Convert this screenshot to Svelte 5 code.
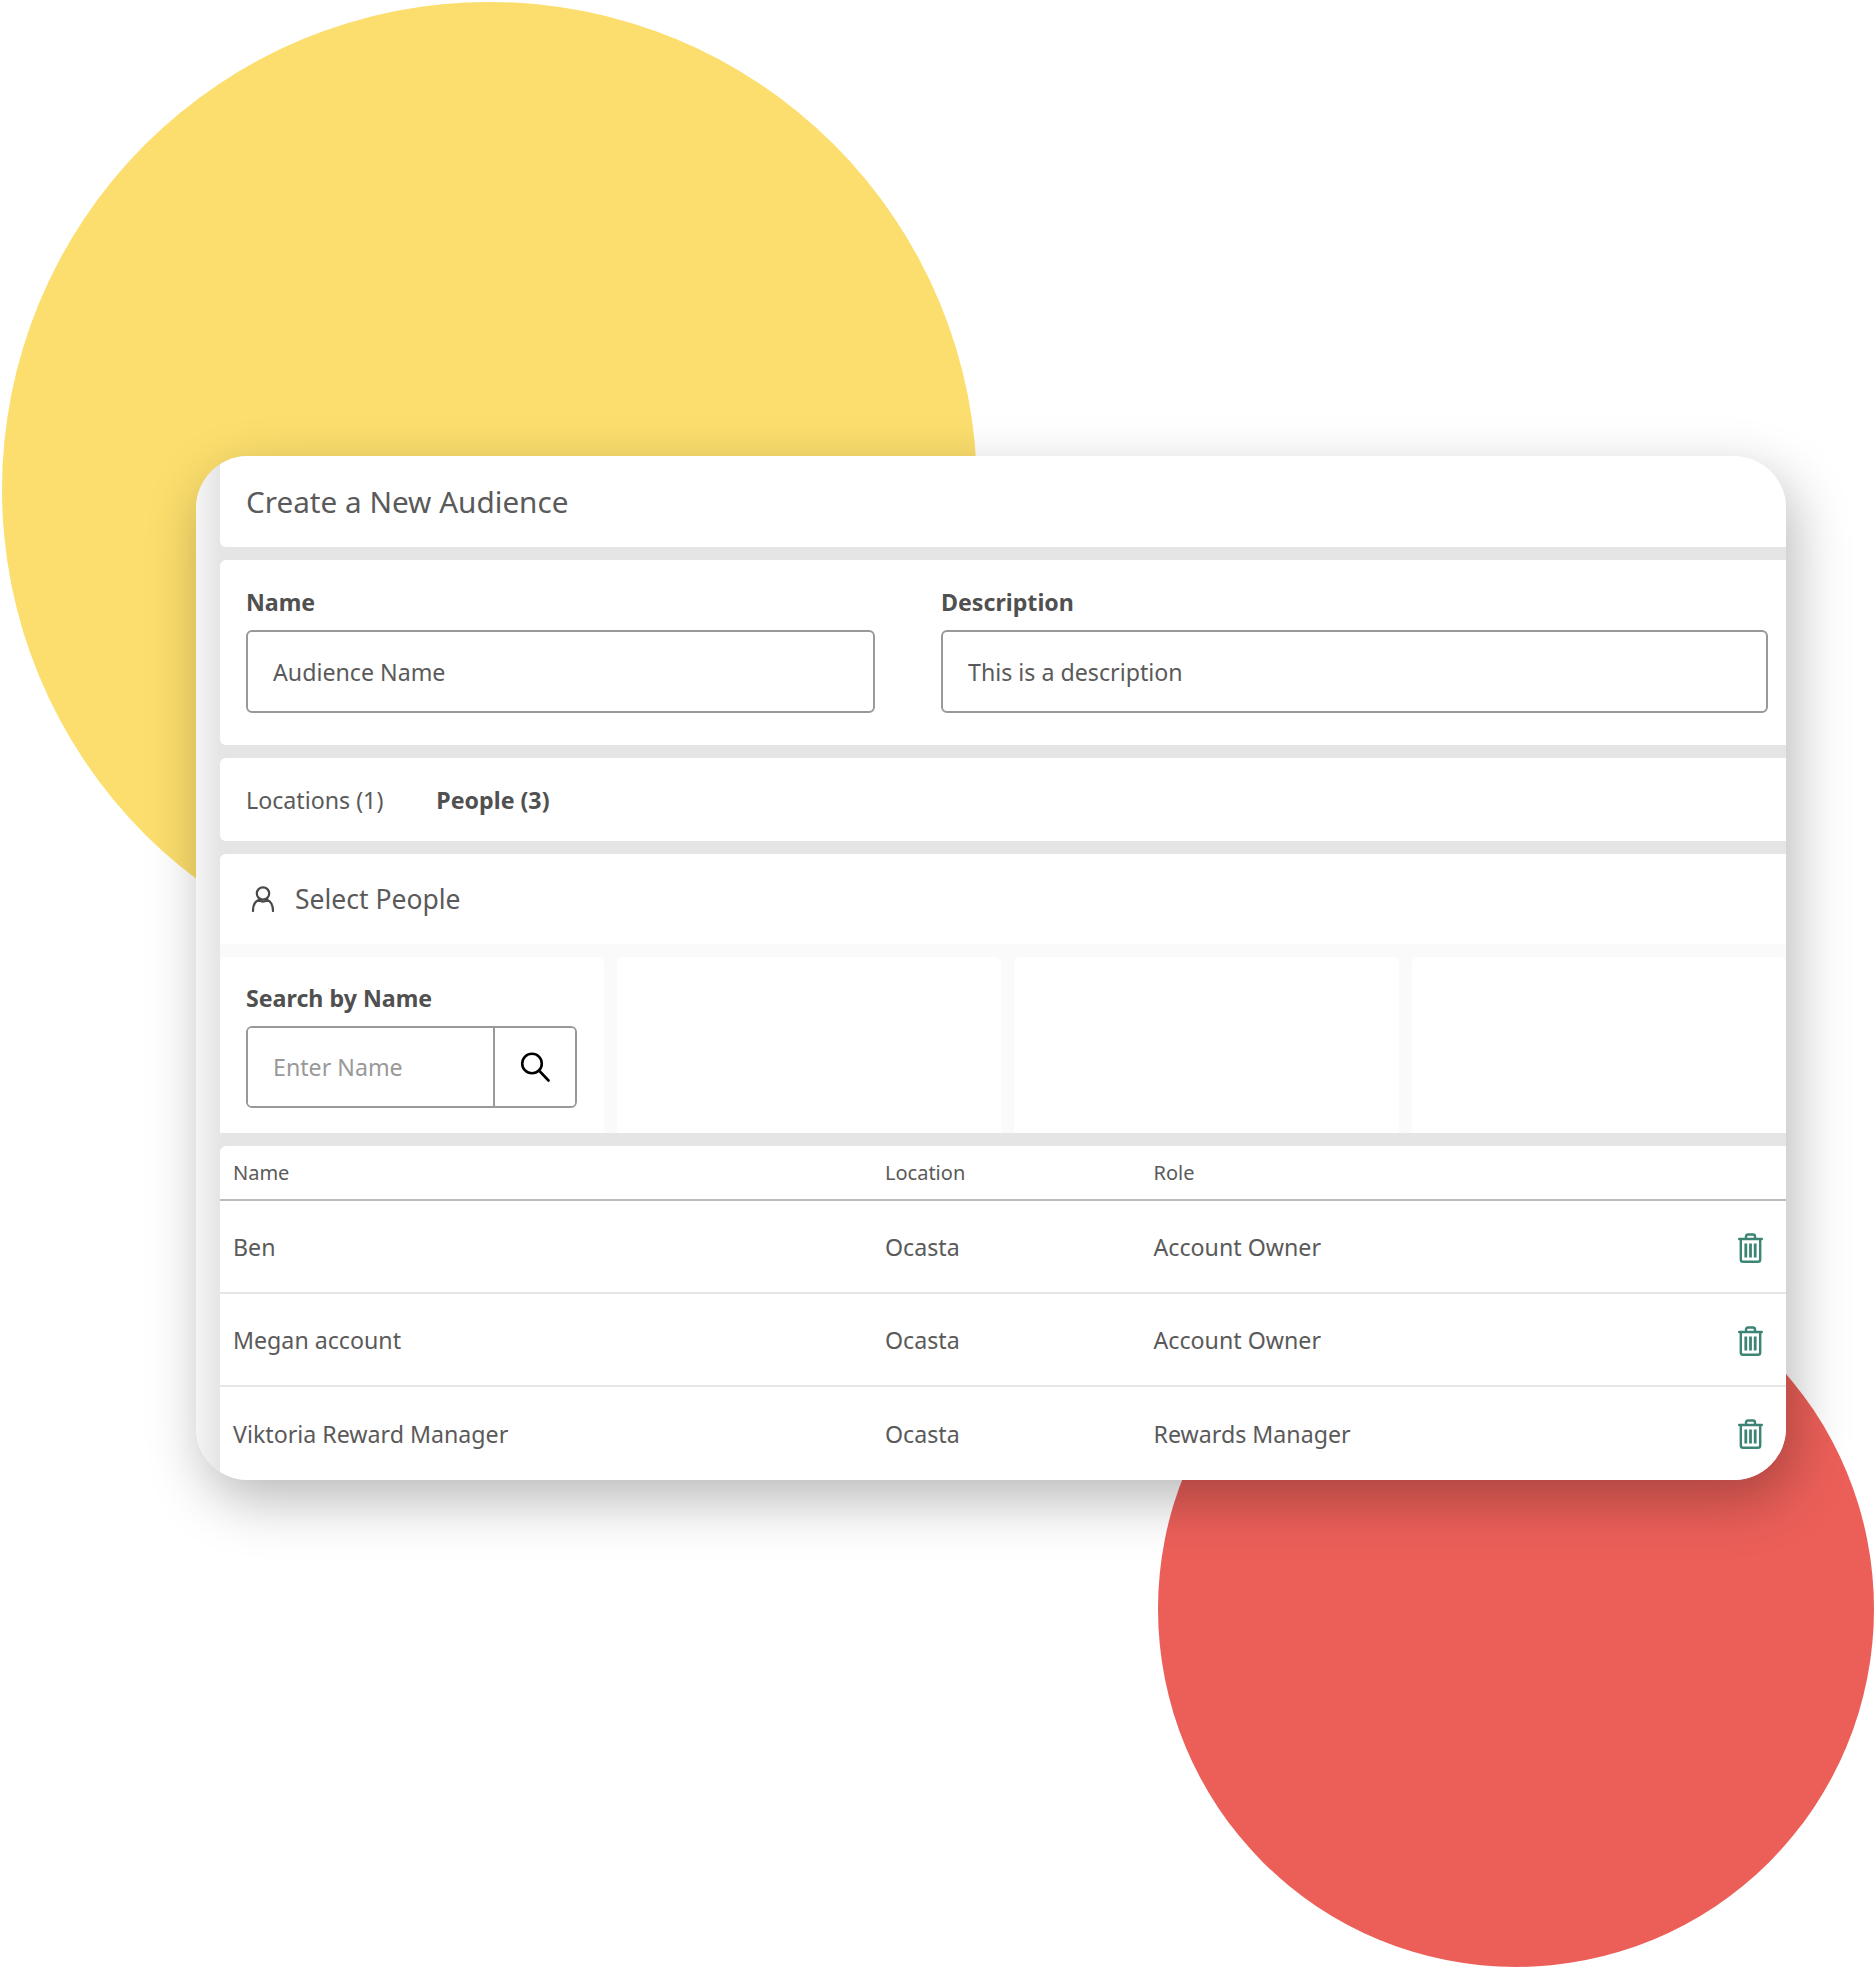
<script lang="ts">
  const people = [
    { name: 'Ben', location: 'Ocasta', role: 'Account Owner' },
    { name: 'Megan account', location: 'Ocasta', role: 'Account Owner' },
    { name: 'Viktoria Reward Manager', location: 'Ocasta', role: 'Rewards Manager' }
  ]
</script>

<div class="stage">
  <div class="circle yellow"></div>
  <div class="circle red"></div>

  <main class="card">
    <header class="panel title">Create a New Audience</header>

    <section class="panel fields">
      <label class="field name">
        <span>Name</span>
        <input value="Audience Name" />
      </label>
      <label class="field description">
        <span>Description</span>
        <input value="This is a description" />
      </label>
    </section>

    <nav class="panel tabs">
      <span>Locations (1)</span>
      <span class="active">People (3)</span>
    </nav>

    <section class="panel select">
      <div class="select-head">
        <svg width="24" height="26" viewBox="0 0 24 26" fill="none" stroke="#4a4a4a" stroke-width="2.200">
          <circle cx="12" cy="7.500" r="6.200" />
          <path d="M2 25c0-6 2.500-10 6-11.300c2.500 2.400 5.500 2.400 8 0c3.500 1.300 6 5.300 6 11.300" stroke-linecap="round" />
        </svg>
        <span>Select People</span>
      </div>
      <div class="filters">
        <div class="filter">
          <span class="label">Search by Name</span>
          <div class="search">
            <input placeholder="Enter Name" />
            <button aria-label="Search">
              <svg width="30" height="30" viewBox="0 0 30 30" fill="none" stroke="#000" stroke-width="2.600">
                <circle cx="12" cy="11.500" r="9.800" />
                <path d="M19 18.500l9.500 10" stroke-linecap="round" />
              </svg>
            </button>
          </div>
        </div>
        <div class="filter"></div>
        <div class="filter"></div>
        <div class="filter"></div>
      </div>
    </section>

    <section class="panel table">
      <div class="row head">
        <span>Name</span>
        <span>Location</span>
        <span>Role</span>
      </div>
      {#each people as person}
        <div class="row">
          <span>{person.name}</span>
          <span>{person.location}</span>
          <span>{person.role}</span>
          <svg class="trash" width="25" height="30" viewBox="0 0 25 30" fill="none" stroke="#3c8474" stroke-width="2.400">
            <path d="M1.200 6h22.600" stroke-linecap="round" />
            <path d="M8 6V3.500Q8 1.500 10 1.500h5Q17 1.500 17 3.500V6" />
            <path d="M2.800 6v20.500q0 2.300 2.300 2.300h14.800q2.300 0 2.300-2.300V6" />
            <path d="M7.800 10.500v14M12.500 10.500v14M17.200 10.500v14" stroke-width="2.800" />
          </svg>
        </div>
      {/each}
    </section>
  </main>
</div>

<style>
  :global(body) {
    background: #fff;
  }

  .stage {
    position: relative;
    width: 1876px;
    height: 1970px;
    box-sizing: border-box;
    padding: 456px 90px 0 196px;
    overflow: hidden;
    font-family: "Noto Sans", sans-serif;
    font-size: 23.200px;
    color: #5a5a5a;
  }

  .circle {
    position: absolute;
    border-radius: 50%;
  }

  .yellow {
    left: 2px;
    top: 2px;
    width: 975px;
    height: 975px;
    background: #fbde6d;
  }

  .red {
    left: 1158px;
    top: 1251px;
    width: 716px;
    height: 716px;
    background: #ec5f59;
  }

  .card {
    position: relative;
    height: 1024px;
    box-sizing: border-box;
    padding-left: 24px;
    display: flex;
    flex-direction: column;
    gap: 13px;
    border-radius: 52px;
    overflow: hidden;
    background: linear-gradient(90deg, #f4f4f4, #e5e5e5 24px);
    box-shadow: 8px 20px 56px rgba(0, 0, 0, 0.28);
  }

  .panel {
    background: #fff;
    border-radius: 6px 0 0 6px;
  }

  .title {
    height: 91px;
    flex: none;
    display: flex;
    align-items: center;
    padding-left: 26px;
    font-size: 29.700px;
  }

  .fields {
    height: 185px;
    flex: none;
    display: flex;
    box-sizing: border-box;
    padding: 24px 18px 0 26px;
    gap: 66px;
  }

  .field {
    display: flex;
    flex-direction: column;
    gap: 10px;
  }

  .field span,
  .label {
    font-weight: 700;
    line-height: 36px;
    color: #505050;
  }

  .field.name {
    width: 629px;
  }

  .field.description {
    flex: 1;
  }

  input {
    font: inherit;
    color: #5a5a5a;
    background: #fff;
    outline: none;
  }

  .field input {
    height: 83px;
    box-sizing: border-box;
    padding: 0 25px;
    border: 2px solid #999;
    border-radius: 6px;
  }

  .tabs {
    height: 83px;
    flex: none;
    display: flex;
    align-items: center;
    gap: 53px;
    padding-left: 26px;
  }

  .active {
    font-weight: 700;
    color: #505050;
  }

  .select {
    height: 279px;
    flex: none;
    background: #fafafa;
  }

  .select-head {
    height: 90px;
    background: #fff;
    display: flex;
    align-items: center;
    gap: 20px;
    padding-left: 31px;
    font-size: 26.500px;
    border-radius: 6px 0 0 0;
  }

  .filters {
    margin-top: 13px;
    height: 176px;
    display: grid;
    grid-template-columns: 384px 384px 385px 1fr;
    gap: 13px;
  }

  .filter {
    background: #fff;
    border-radius: 6px 6px 0 0;
    box-sizing: border-box;
    padding: 23px 0 0 26px;
  }

  .label {
    display: block;
    margin-bottom: 10px;
  }

  .search {
    display: flex;
    width: 331px;
    height: 82px;
    box-sizing: border-box;
    border: 2px solid #999;
    border-radius: 6px;
    overflow: hidden;
  }

  .search input {
    width: 245px;
    flex: none;
    box-sizing: border-box;
    border: none;
    padding: 0 0 0 25px;
    min-width: 0;
  }

  .search input::placeholder {
    color: #999;
    opacity: 1;
  }

  .search button {
    flex: 1;
    padding: 0;
    border: none;
    border-left: 2px solid #999;
    background: #fff;
    display: flex;
    align-items: center;
    justify-content: center;
  }

  .table {
    flex: 1;
    display: flex;
    flex-direction: column;
    border-radius: 6px 0 0 0;
  }

  .row {
    position: relative;
    height: 93px;
    box-sizing: border-box;
    display: grid;
    grid-template-columns: 652px 268.500px 1fr;
    align-items: center;
    padding-left: 13px;
    border-bottom: 2px solid #e6e6e6;
  }

  .row:last-child {
    border-bottom: none;
  }

  .row.head {
    height: 55px;
    font-size: 20px;
    border-bottom-color: #bbb;
  }

  .trash {
    position: absolute;
    right: 23px;
    top: 32px;
  }
</style>
